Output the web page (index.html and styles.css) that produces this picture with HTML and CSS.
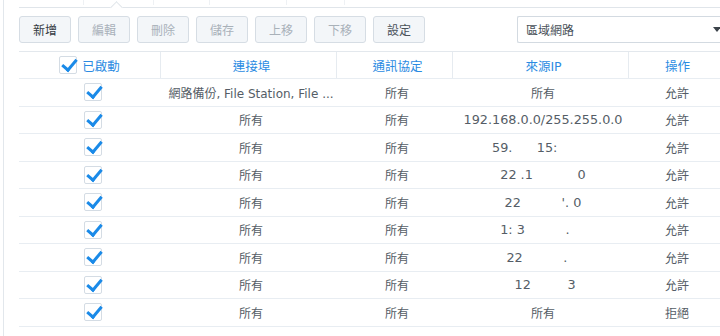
FILE: index.html
```html
<!DOCTYPE html>
<html lang="zh-Hant">

<head>
    <meta charset="UTF-8">
    <title>防火牆規則</title>
    <link rel="stylesheet" href="styles.css">
</head>

<body>
    <div class="panel">
        <div class="tabbar">
            <span class="tab"></span>
            <span class="tab"></span>
            <span class="tab"></span>
            <span class="tab"></span>
            <span class="tab"></span>
            <span class="notch"></span>
        </div>

        <div class="toolbar">
            <button class="btn">新增</button>
            <button class="btn" disabled>編輯</button>
            <button class="btn" disabled>刪除</button>
            <button class="btn" disabled>儲存</button>
            <button class="btn" disabled>上移</button>
            <button class="btn" disabled>下移</button>
            <button class="btn btn-set">設定</button>
            <div class="select">
                <span>區域網路</span>
                <span class="caret"></span>
            </div>
        </div>

        <div class="grid">
            <div class="row head">
                <div class="cell first"><span class="check"></span>已啟動</div>
                <div class="cell">連接埠</div>
                <div class="cell">通訊協定</div>
                <div class="cell">來源IP</div>
                <div class="cell">操作</div>
            </div>
            <div class="row">
                <div class="cell first"><span class="check"></span></div>
                <div class="cell">網路備份, File Station, File ...</div>
                <div class="cell">所有</div>
                <div class="cell">所有</div>
                <div class="cell">允許</div>
            </div>
            <div class="row">
                <div class="cell first"><span class="check"></span></div>
                <div class="cell">所有</div>
                <div class="cell">所有</div>
                <div class="cell ip">192.168.0.0/255.255.0.0</div>
                <div class="cell">允許</div>
            </div>
            <div class="row">
                <div class="cell first"><span class="check"></span></div>
                <div class="cell">所有</div>
                <div class="cell">所有</div>
                <div class="cell ip">59.      15:         </div>
                <div class="cell">允許</div>
            </div>
            <div class="row">
                <div class="cell first"><span class="check"></span></div>
                <div class="cell">所有</div>
                <div class="cell">所有</div>
                <div class="cell ip">22 .1           0</div>
                <div class="cell">允許</div>
            </div>
            <div class="row">
                <div class="cell first"><span class="check"></span></div>
                <div class="cell">所有</div>
                <div class="cell">所有</div>
                <div class="cell ip">22          '. 0</div>
                <div class="cell">允許</div>
            </div>
            <div class="row">
                <div class="cell first"><span class="check"></span></div>
                <div class="cell">所有</div>
                <div class="cell">所有</div>
                <div class="cell ip">1: 3          .    </div>
                <div class="cell">允許</div>
            </div>
            <div class="row">
                <div class="cell first"><span class="check"></span></div>
                <div class="cell">所有</div>
                <div class="cell">所有</div>
                <div class="cell ip">22          .   </div>
                <div class="cell">允許</div>
            </div>
            <div class="row">
                <div class="cell first"><span class="check"></span></div>
                <div class="cell">所有</div>
                <div class="cell">所有</div>
                <div class="cell ip"> 12         3</div>
                <div class="cell">允許</div>
            </div>
            <div class="row">
                <div class="cell first"><span class="check"></span></div>
                <div class="cell">所有</div>
                <div class="cell">所有</div>
                <div class="cell">所有</div>
                <div class="cell">拒絕</div>
            </div>
        </div>
    </div>
</body>

</html>
```

FILE: styles.css
```css
body {
    margin: 0;
    font-family: 'DejaVu Sans', 'Noto Sans CJK TC', sans-serif;
    font-size: 12px;
    color: #555d66;
    background: #ffffff;
    overflow: hidden;
}

.panel {
    margin-left: 3px;
    padding-left: 15px;
    border-left: 1px solid #e2e7ec;
    height: 336px;
    box-sizing: border-box;
    overflow: hidden;
}

.tabbar {
    position: relative;
    display: flex;
    height: 7px;
    border-bottom: 1px solid #e0e5ea;
}

.tab {
    width: 64px;
    border-right: 1px solid #eef1f4;
    height: 5px;
}

.tab:nth-child(2) { width: 69px; }
.tab:nth-child(3) { width: 55px; }
.tab:nth-child(4) { width: 76px; }
.tab:nth-child(5) { width: 57px; }

.notch {
    position: absolute;
    left: 93px;
    bottom: -1px;
    width: 8px;
    height: 8px;
    background: #ffffff;
    border-left: 1px solid #e0e5ea;
    border-top: 1px solid #e0e5ea;
    transform: translateY(4px) rotate(45deg);
    transform-origin: center;
}

.toolbar {
    display: flex;
    gap: 7px;
    margin-top: 8px;
    height: 27px;
}

.btn {
    flex-shrink: 0;
    width: 52px;
    height: 27px;
    padding: 0;
    font-family: inherit;
    font-size: 12px;
    color: #333a42;
    background: #f3f6f9;
    border: 1px solid #d6dde4;
    border-radius: 3px;
}

.btn:disabled {
    color: #a9b1b9;
}

.btn-set {
    color: #4a525a;
}

.select {
    display: flex;
    align-items: center;
    justify-content: space-between;
    margin-left: 85px;
    flex: 1 0 auto;
    margin-right: -8px;
    box-sizing: border-box;
    padding: 0 7px 0 8px;
    border: 1px solid #d3dae1;
    border-right: none;
    border-radius: 2px;
    color: #4a525a;
}

.caret {
    width: 0;
    height: 0;
    border-left: 4px solid transparent;
    border-right: 4px solid transparent;
    border-top: 5px solid #3c434a;
}

.grid {
    margin-top: 8px;
    border-top: 1px solid #e3e8ed;
}

.row {
    display: grid;
    grid-template-columns: 141px 176px 116px 176px 1fr;
    height: 27.5px;
    box-sizing: border-box;
    border-bottom: 1px solid #e8edf2;
}

.row.head {
    height: 27px;
    color: #2b8be2;
    font-size: 12.5px;
}

.cell {
    display: flex;
    align-items: center;
    justify-content: center;
    padding-left: 6px;
    white-space: nowrap;
}

.head .cell + .cell {
    border-left: 1px solid #e6ebf0;
}

.head .cell.first {
    padding-left: 0;
}

.ip {
    font-size: 12.8px;
    white-space: pre;
}

.check {
    position: relative;
    width: 16px;
    height: 16px;
    border: 1px solid #d4dce4;
    border-radius: 2px;
    background: #ffffff;
}

.head .check {
    margin-right: 5px;
}

.check::after {
    content: "";
    position: absolute;
    left: 5px;
    top: -1px;
    width: 6px;
    height: 12px;
    border-right: 3px solid #1a8ae8;
    border-bottom: 3px solid #1a8ae8;
    transform: rotate(40deg);
}
```
